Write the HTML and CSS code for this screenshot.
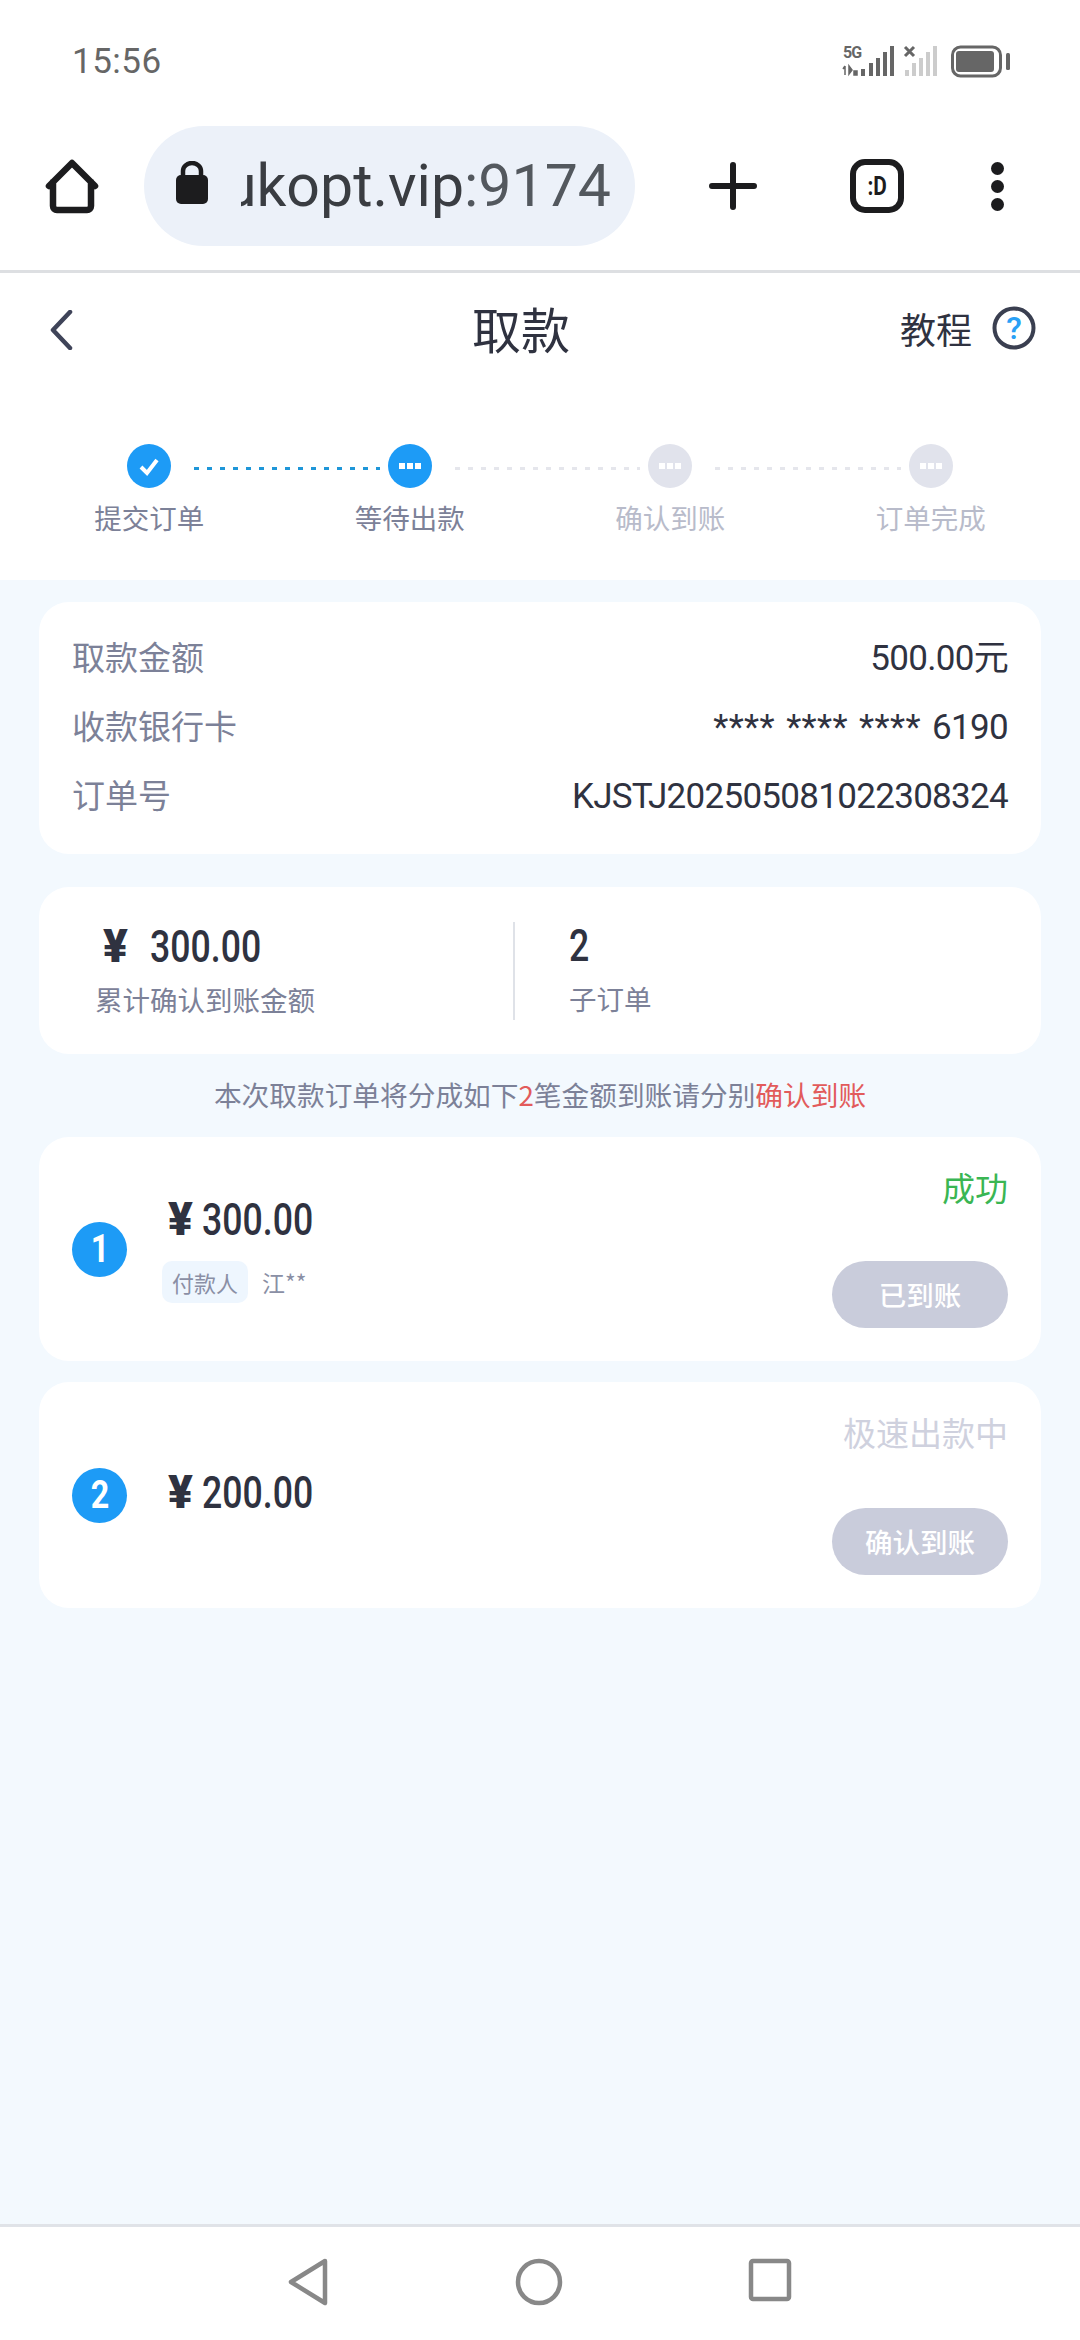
FILE: index.html
```html
<!DOCTYPE html>
<html lang="zh-CN">
<head>
<meta charset="utf-8">
<title>取款</title>
<link rel="stylesheet" href="styles.css">
</head>
<body>
<div class="screen">
  <div class="statusbar">
    <span class="time">15:56</span>
    <svg class="status-icons" width="170" height="38" viewBox="842 42 170 38">
      <text x="843" y="58" class="net-label">5G</text>
      <path d="M845 66v9M843 69l2-3M849 66l3 4-3 4zM854 71h3v4h-3z" fill="#666" stroke="#666" stroke-width="1.5"/>
      <g fill="#666">
        <rect x="861" y="69" width="4" height="7"/><rect x="869" y="63" width="4" height="13"/><rect x="876" y="58" width="4" height="18"/><rect x="883" y="52" width="4" height="24"/><rect x="890" y="46" width="4" height="30"/>
      </g>
      <path d="M905 47l9 9M914 47l-9 9" stroke="#666" stroke-width="3"/>
      <g fill="#ccc">
        <rect x="905" y="70" width="4" height="6"/><rect x="912" y="63" width="4" height="13"/><rect x="919" y="58" width="4" height="18"/><rect x="926" y="52" width="4" height="24"/><rect x="933" y="46" width="4" height="30"/>
      </g>
      <rect x="952.5" y="47" width="48" height="29" rx="8" fill="none" stroke="#666" stroke-width="3"/>
      <rect x="956" y="51" width="38" height="21" rx="3" fill="#666"/>
      <rect x="1006" y="53" width="4" height="17" rx="1.5" fill="#666"/>
    </svg>
  </div>

  <div class="toolbar">
    <svg class="home-icon" width="60" height="60" viewBox="0 0 60 60">
      <path d="M7 30 L30 7 L53 30 M11 26 V50 a4 4 0 0 0 4 4 H45 a4 4 0 0 0 4 -4 V26" fill="none" stroke="#1c1c1e" stroke-width="6.5" stroke-linecap="round" stroke-linejoin="round"/>
    </svg>
    <div class="urlbar">
      <svg class="lock" width="34" height="44" viewBox="0 0 34 44">
        <path d="M8 18V10a9 8 0 0 1 18 0v8" fill="none" stroke="#1c1c1e" stroke-width="4.5"/>
        <rect x="1" y="14" width="32" height="29" rx="5" fill="#1c1c1e"/>
      </svg>
      <div class="url-clip"><span class="url-text">ukopt.vip<span class="url-port">:9174</span></span></div>
    </div>
    <svg class="plus" width="48" height="48" viewBox="0 0 48 48">
      <path d="M24 3v42M3 24h42" stroke="#1c1c1e" stroke-width="6" stroke-linecap="round"/>
    </svg>
    <div class="tab-box"><span class="tab-label">:D</span></div>
    <div class="more"><i></i><i></i><i></i></div>
  </div>

  <header class="pagehead">
    <svg class="back" width="24" height="40" viewBox="0 0 24 40">
      <path d="M21 2 L4 20 L21 38" fill="none" stroke="#3f4459" stroke-width="4.5" stroke-linecap="round" stroke-linejoin="round"/>
    </svg>
    <h1 class="title">取款</h1>
    <div class="tutorial">
      <span>教程</span>
      <svg width="44" height="44" viewBox="0 0 44 44">
        <circle cx="22" cy="22" r="19.5" fill="none" stroke="#3a3f50" stroke-width="4"/>
        <text x="22" y="33" class="help-mark">?</text>
      </svg>
    </div>
  </header>

  <section class="steps">
    <div class="track">
      <span class="dot dot-on">
        <svg width="24" height="24" viewBox="0 0 24 24"><path d="M4 13l6 6L20 6" fill="none" stroke="#fff" stroke-width="4"/></svg>
      </span>
      <span class="link link-on"></span>
      <span class="dot dot-on"><b></b><b></b><b></b></span>
      <span class="link"></span>
      <span class="dot"><b></b><b></b><b></b></span>
      <span class="link"></span>
      <span class="dot"><b></b><b></b><b></b></span>
    </div>
    <div class="step-labels">
      <span>提交订单</span><span>等待出款</span><span class="muted">确认到账</span><span class="muted">订单完成</span>
    </div>
  </section>

  <main class="content">
    <section class="card info">
      <div class="row"><span class="key">取款金额</span><span class="val">500.00元</span></div>
      <div class="row"><span class="key">收款银行卡</span><span class="val val-card">**** **** **** <span class="val-tail">6190</span></span></div>
      <div class="row"><span class="key">订单号</span><span class="val">KJSTJ202505081022308324</span></div>
    </section>

    <section class="card summary">
      <div class="sum-cell sum-left">
        <div class="sum-value"><span class="yen yen-wide">¥</span><span class="narrow">300.00</span></div>
        <div class="sum-label">累计确认到账金额</div>
      </div>
      <div class="sum-cell sum-right">
        <div class="sum-value"><span class="narrow">2</span></div>
        <div class="sum-label">子订单</div>
      </div>
    </section>

    <p class="notice">本次取款订单将分成如下<em>2</em>笔金额到账请分别<em>确认到账</em></p>

    <section class="card order">
      <span class="badge"><span class="narrow-digit">1</span></span>
      <div class="order-main">
        <div class="amount"><span class="yen">¥</span><span class="narrow">300.00</span></div>
        <div class="payer"><span class="tag">付款人</span><span class="payer-name">江**</span></div>
      </div>
      <div class="order-side">
        <span class="state state-ok">成功</span>
        <span class="btn">已到账</span>
      </div>
    </section>

    <section class="card order order-tall">
      <span class="badge"><span class="narrow-digit">2</span></span>
      <div class="order-main order-main-solo">
        <div class="amount"><span class="yen">¥</span><span class="narrow">200.00</span></div>
      </div>
      <div class="order-side">
        <span class="state state-wait">极速出款中</span>
        <span class="btn">确认到账</span>
      </div>
    </section>
  </main>

  <nav class="navbar">
    <svg width="42" height="48" viewBox="0 0 42 48"><path d="M37 3 L3 24 L37 45 Z" fill="none" stroke="#888" stroke-width="4.5" stroke-linejoin="round"/></svg>
    <svg width="48" height="48" viewBox="0 0 48 48"><circle cx="24" cy="24" r="21" fill="none" stroke="#888" stroke-width="4.5"/></svg>
    <svg width="44" height="44" viewBox="0 0 44 44"><rect x="3" y="3" width="38" height="38" rx="2" fill="none" stroke="#888" stroke-width="4.5"/></svg>
  </nav>
</div>
</body>
</html>
```

FILE: styles.css
```css
* { box-sizing: border-box; }
html, body { margin: 0; padding: 0; }
body {
  font-family: "Noto Sans CJK SC", "Noto Sans", sans-serif;
  background: #fff;
  color: #2c2f3e;
}
.screen {
  width: 1080px;
  height: 2340px;
  display: flex;
  flex-direction: column;
  overflow: hidden;
}

/* status bar */
.statusbar {
  height: 122px;
  flex: none;
  display: flex;
  align-items: center;
  justify-content: space-between;
  padding: 0 68px 0 72px;
}
.time { font: 400 35px/1 Roboto, sans-serif; color: #666; letter-spacing: 0.5px; }
.net-label { font: 700 16px Roboto, sans-serif; fill: #666; letter-spacing: -1px; }

/* browser toolbar */
.toolbar {
  height: 148px;
  flex: none;
  display: flex;
  align-items: flex-start;
  padding: 4px 0 0 42px;
}
.home-icon { margin-top: 30px; flex: none; }
.urlbar {
  width: 491px;
  height: 120px;
  margin-left: 42px;
  border-radius: 60px;
  background: #ecf1f9;
  display: flex;
  align-items: center;
  padding-left: 31px;
  flex: none;
}
.lock { flex: none; margin-top: -6px; }
.url-clip {
  width: 370px;
  margin-left: 32px;
  overflow: hidden;
  display: flex;
  justify-content: flex-end;
  white-space: nowrap;
}
.url-text { font: 400 59px/76px Roboto, sans-serif; color: #3a3d42; flex: none; }
.url-port { color: #53585e; }
.plus { margin: 36px 0 0 74px; flex: none; }
.tab-box {
  width: 54px;
  height: 54px;
  margin: 33px 0 0 93px;
  border: 6px solid #1c1c1e;
  border-radius: 15px;
  display: flex;
  align-items: center;
  justify-content: center;
  font: 700 26px/1 Roboto, sans-serif;
  color: #1c1c1e;
  flex: none;
}
.tab-label { display: inline-block; transform: scaleX(0.8); }
.more {
  margin: 36px 0 0 87px;
  display: flex;
  flex-direction: column;
  gap: 5px;
  flex: none;
}
.more i { display: block; width: 13px; height: 13px; border-radius: 50%; background: #1c1c1e; }

/* page header */
.pagehead {
  height: 117px;
  flex: none;
  border-top: 3px solid #dddfe2;
  display: grid;
  grid-template-columns: 423px auto 1fr;
  align-items: center;
  padding: 0 44px 4px 49px;
}
.back { justify-self: start; margin-top: 4px; }
.title { margin: 0; font-size: 49px; line-height: 70px; font-weight: 400; color: #2f3240; }
.tutorial {
  justify-self: end;
  display: flex;
  align-items: center;
  gap: 20px;
  font-size: 36px;
  line-height: 50px;
  color: #2f3240;
}
.help-mark { font: 500 32px Roboto, sans-serif; fill: #2aa0f5; text-anchor: middle; }

/* steps */
.steps { height: 193px; flex: none; padding-top: 57px; }
.track { display: flex; align-items: center; padding: 0 127px; }
.dot {
  width: 44px;
  height: 44px;
  flex: none;
  border-radius: 50%;
  background: #e1e3ec;
  display: flex;
  align-items: center;
  justify-content: center;
  gap: 2px;
}
.dot b { width: 6px; height: 6px; background: #fff; display: block; }
.dot-on { background: #1d9bf6; }
.link {
  flex: 1;
  height: 3px;
  margin: 4px 8px 0 23px;
  background: repeating-linear-gradient(90deg, #e5e6ec 0 5px, transparent 5px 13px);
}
.link-on { background: repeating-linear-gradient(90deg, #1e96d8 0 5px, transparent 5px 13px); }
.step-labels {
  margin-top: 9px;
  padding: 0 19px;
  display: grid;
  grid-template-columns: repeat(4, 1fr);
  text-align: center;
  font-size: 27.5px;
  line-height: 40px;
  color: #7c8198;
}
.muted { color: #b8bbca; }

/* main */
.content {
  flex: 1;
  background: #f3f9fe;
  padding: 22px 39px 0;
  display: flex;
  flex-direction: column;
}
.card { background: #fff; border-radius: 30px; }
.info { height: 252px; padding: 19px 33px 0; }
.row { height: 69px; display: flex; align-items: center; justify-content: space-between; }
.key { font-size: 33px; color: #7c8198; }
.val { font: 400 35px/1 Roboto, "Noto Sans CJK SC", sans-serif; color: #2f3240; letter-spacing: -0.7px; margin-top: 5px; }
.val-card { letter-spacing: 0.4px; word-spacing: 2px; }
.val-tail { letter-spacing: -0.7px; }

.summary { height: 167px; margin-top: 33px; display: flex; align-items: center; }
.sum-cell { height: 98px; }
.sum-left { width: 476px; padding-left: 56px; border-right: 2px solid #dfe2e8; }
.sum-right { padding-left: 54px; }
.sum-value { font: 500 44px/48px Roboto, sans-serif; color: #2f3240; white-space: nowrap; }
.sum-label { font-size: 27.5px; line-height: 40px; margin-top: 8px; color: #7c8198; white-space: nowrap; }
.yen { font: 900 46px/48px Roboto, sans-serif; margin: 0 9px 0 6px; }
.yen-wide { margin: 0 22px 0 8px; }
.narrow { display: inline-block; transform: scaleX(0.81); transform-origin: 0 50%; }
.narrow-digit { display: inline-block; transform: scaleX(0.85); }

.notice {
  margin: 0;
  height: 83px;
  padding-bottom: 4px;
  display: flex;
  align-items: center;
  justify-content: center;
  font-size: 27.7px;
  color: #7c8198;
}
.notice em { font-style: normal; color: #e25b5b; }

.order {
  height: 224px;
  margin-bottom: 21px;
  padding: 0 33px;
  display: flex;
  align-items: center;
}
.order-tall { height: 226px; }
.badge {
  width: 55px;
  height: 55px;
  flex: none;
  border-radius: 50%;
  background: #1d9bf6;
  color: #fff;
  display: flex;
  align-items: center;
  justify-content: center;
  font: 700 38px/1 Roboto, sans-serif;
}
.order-main { margin-left: 35px; flex: 1; display: flex; flex-direction: column; gap: 16px; }
.order-main-solo { margin-top: -4px; }
.amount { font: 500 44px/50px Roboto, sans-serif; color: #2f3240; white-space: nowrap; }
.payer { display: flex; align-items: center; gap: 14px; }
.tag {
  height: 42px;
  padding: 0 10px;
  border-radius: 10px;
  background: #eef6fe;
  font-size: 22px;
  line-height: 42px;
  color: #8a8fa5;
}
.payer-name { font-size: 23px; color: #8a8fa5; }
.order-side {
  height: 100%;
  padding: 27px 0 33px;
  display: flex;
  flex-direction: column;
  align-items: flex-end;
  justify-content: space-between;
}
.state { font-size: 33px; line-height: 46px; }
.state-ok { color: #3ab653; }
.state-wait { color: #cfd1de; }
.btn {
  width: 176px;
  height: 67px;
  border-radius: 34px;
  background: #c9ccdb;
  color: #fff;
  font-size: 27.5px;
  font-weight: 500;
  padding-bottom: 2px;
  display: flex;
  align-items: center;
  justify-content: center;
}

/* bottom bar */
.navbar {
  height: 116px;
  flex: none;
  border-top: 3px solid #e0e3e8;
  padding: 31px 0 0 288px;
  display: flex;
  align-items: flex-start;
  gap: 185px;
  background: #fff;
}
```
